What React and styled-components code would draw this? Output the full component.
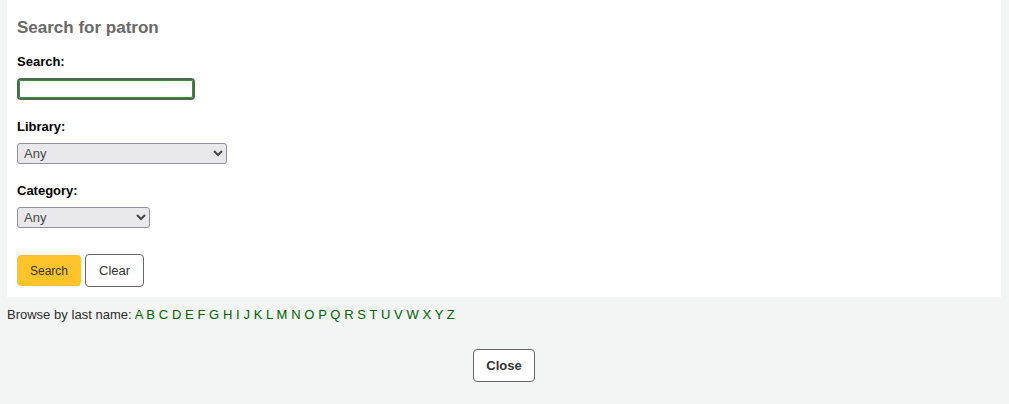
import React from 'react';
import styled, { createGlobalStyle } from 'styled-components';

const GlobalStyle = createGlobalStyle`
  html, body {
    margin: 0;
    padding: 0;
    background: #f3f4f4;
    font-family: "Liberation Sans", Arial, sans-serif;
    font-size: 13px;
    color: #333;
  }
`;

const Page = styled.div`
  display: flex;
  flex-direction: column;
  padding: 0 8px 0 7px;
`;

const Panel = styled.form`
  background: #fff;
  padding: 18px 10px 10px;
`;

const Title = styled.h1`
  margin: 0 0 16px;
  font-size: 17px;
  line-height: 20px;
  font-weight: bold;
  color: #696969;
`;

const Field = styled.div`
  display: flex;
  flex-direction: column;
  align-items: flex-start;
  margin-bottom: ${({ last }) => (last ? '26px' : '19px')};
`;

const Label = styled.label`
  font-weight: bold;
  font-size: 13px;
  line-height: 16px;
  color: #000;
  margin-bottom: 8px;
`;

const TextInput = styled.input`
  box-sizing: border-box;
  width: 178px;
  height: 22px;
  border: 2px solid #4b6a4b;
  border-radius: 4px;
  box-shadow: inset 0 0 0 1px #3f8a3f;
  outline: none;
  padding: 0 4px;
  font: inherit;
`;

const Select = styled.select`
  box-sizing: border-box;
  width: ${({ w }) => w}px;
  height: 21px;
  font-family: "Liberation Sans", Arial, sans-serif;
  font-size: 13px;
  color: #444;
  background: #e9e9ed;
  border: 1px solid #8f8f9d;
  border-radius: 3px;
  padding: 0 2px;
`;

const Actions = styled.div`
  display: flex;
  align-items: center;
  gap: 4px;
`;

const Button = styled.button`
  box-sizing: border-box;
  font-family: "Liberation Sans", Arial, sans-serif;
  font-size: ${({ primary }) => (primary ? '12px' : '13px')};
  font-weight: ${({ bold }) => (bold ? 'bold' : 'normal')};
  height: ${({ primary }) => (primary ? '31px' : '33px')};
  padding: 0 ${({ pad }) => pad || 12}px;
  border-radius: 4px;
  cursor: pointer;
  color: #333;
  background: ${({ primary }) => (primary ? '#ffc32b' : '#fff')};
  border: ${({ primary }) => (primary ? '1px solid #ffc32b' : '1px solid #666')};
`;

const Browse = styled.div`
  margin-top: 10px;
  line-height: 16px;
  color: #2b2b2b;
  word-spacing: 0.12px;
`;

const Letter = styled.a`
  color: #006100;
  text-decoration: none;
`;

const Footer = styled.div`
  display: flex;
  justify-content: center;
  margin-top: 26px;
`;

const letters = 'ABCDEFGHIJKLMNOPQRSTUVWXYZ'.split('');

export default function App() {
  return (
    <Page>
      <GlobalStyle />
      <Panel onSubmit={(e) => e.preventDefault()}>
        <Title>Search for patron</Title>
        <Field>
          <Label htmlFor="searchmember">Search:</Label>
          <TextInput id="searchmember" type="text" />
        </Field>
        <Field>
          <Label htmlFor="branchcode">Library:</Label>
          <Select id="branchcode" w={210}>
            <option>Any</option>
          </Select>
        </Field>
        <Field last>
          <Label htmlFor="categorycode">Category:</Label>
          <Select id="categorycode" w={133}>
            <option>Any</option>
          </Select>
        </Field>
        <Actions>
          <Button primary type="submit">Search</Button>
          <Button pad={13} type="reset">Clear</Button>
        </Actions>
      </Panel>
      <Browse>
        Browse by last name:
        {letters.map((l) => (
          <React.Fragment key={l}>
            {' '}
            <Letter href="#">{l}</Letter>
          </React.Fragment>
        ))}
      </Browse>
      <Footer>
        <Button bold type="button">Close</Button>
      </Footer>
    </Page>
  );
}
